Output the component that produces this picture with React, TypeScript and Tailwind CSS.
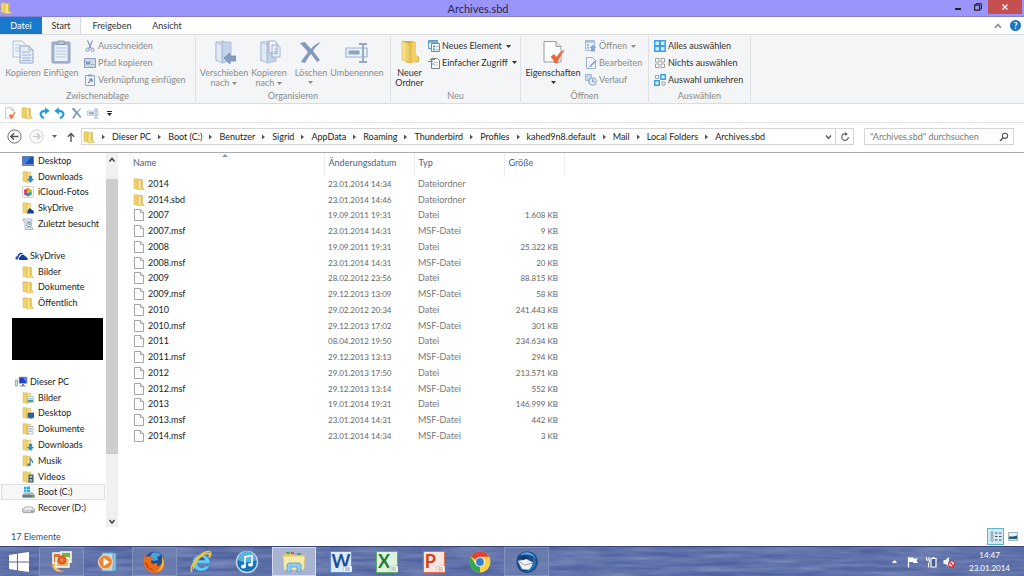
import type { ReactNode } from 'react';

type IconProps = { className?: string };

const FolderIcon = ({ className = 'h-3 w-3' }: IconProps) => (
  <svg viewBox="0 0 12 12" className={className}>
    <path d="M1 .8h4l1 1v9.500L1 10.500z" fill="#f0d26a" stroke="#d6b146" strokeWidth=".5" />
    <path d="M5 2l4-1v8l2 1v1.500L5 11.700z" fill="#f8e48f" stroke="#cda63a" strokeWidth=".5" />
    <path d="M8 1.500l1.500 0v8l-1.500 1z" fill="#e2b840" />
  </svg>
);

const PageIcon = ({ className = 'h-3 w-3' }: IconProps) => (
  <svg viewBox="0 0 12 12" className={className}>
    <path d="M1.500.5h6l3 3v8h-9z" fill="#fdfdfd" stroke="#8f8f8f" strokeWidth=".8" />
    <path d="M7.500.5v3h3" fill="#e8e8e8" stroke="#8f8f8f" strokeWidth=".7" />
  </svg>
);

// Folder with a small picture laid over the lower right corner
const BadgeFolder = ({ children }: { children: ReactNode }) => (
  <svg viewBox="0 0 12 12" className="h-3 w-3 shrink-0">
    <path d="M1 .8h4l1 1v9.500L1 10.500z" fill="#f0d26a" stroke="#d6b146" strokeWidth=".5" />
    <path d="M5 2l3.500-1v9L5 11.500z" fill="#f8e48f" stroke="#cda63a" strokeWidth=".5" />
    {children}
  </svg>
);

const DownloadsIcon = () => (
  <BadgeFolder>
    <path d="M7 5h3v3h1.700L8.500 11.700 5.300 8H7z" fill="#2f8fd0" stroke="#1b6ca8" strokeWidth=".3" />
  </BadgeFolder>
);

const SkyFolderIcon = () => (
  <BadgeFolder>
    <path d="M5.500 11.500V9l2-3 2 1.500 2.300 1.500v2.500z" fill="#0f3f94" />
  </BadgeFolder>
);

const PicturesIcon = () => (
  <BadgeFolder>
    <path d="M5.500 4.500h6v6h-6z" fill="#e8f3f5" stroke="#8fa5ad" strokeWidth=".5" />
    <path d="M6 8h5v2H6z" fill="#4f9a9c" />
    <path d="M6 6h5v1.500H6z" fill="#9fd0ea" />
  </BadgeFolder>
);

const DesktopFolderIcon = () => (
  <BadgeFolder>
    <path d="M6 6h6v4.500H6z" fill="#2a5fb0" stroke="#34486b" strokeWidth=".6" />
    <path d="M7.500 11.300h3" stroke="#555" strokeWidth=".8" />
  </BadgeFolder>
);

const DocsIcon = () => (
  <BadgeFolder>
    <path d="M6 3.500h5v7.500H6z" fill="#f5f8fb" stroke="#8b9aa8" strokeWidth=".6" />
    <path d="M7 5.500h3M7 7h3M7 8.500h3" stroke="#6f87a8" strokeWidth=".5" />
  </BadgeFolder>
);

const MusicIcon = () => (
  <BadgeFolder>
    <path d="M8 3c.5 1.500 3 2 2.500 5" fill="none" stroke="#2a87bd" strokeWidth="1.300" />
    <path d="M8 3v6.500" stroke="#2a87bd" />
    <ellipse cx="7" cy="9.800" rx="1.700" ry="1.300" fill="#2a87bd" />
  </BadgeFolder>
);

const VideosIcon = () => (
  <BadgeFolder>
    <path d="M6.500 3.500h5v8h-5z" fill="#33444c" />
    <path d="M7.700 4.500h2.600v2.500H7.700zM7.700 8h2.600v2.500H7.700z" fill="#8fc4c2" />
    <path d="M7 4v7.500M11 4v7.500" stroke="#d5dde0" strokeWidth=".4" strokeDasharray=".6 .6" />
  </BadgeFolder>
);

const DesktopIcon = () => (
  <svg viewBox="0 0 12 12" className="h-3 w-3 shrink-0">
    <path d="M.5 1.500h11v9H.5z" fill="#1d4fae" stroke="#4d6c9e" strokeWidth=".7" />
    <path d="M1 2h8L3 9H1z" fill="#3f7fdc" />
    <path d="M1 9.500h10" stroke="#8fa9cf" strokeWidth=".8" />
  </svg>
);

const ICloudIcon = () => (
  <svg viewBox="0 0 12 12" className="h-3 w-3 shrink-0">
    <rect x=".4" y=".4" width="11.200" height="11.200" rx="2" fill="#fff" stroke="#b5b5b5" strokeWidth=".7" />
    <circle cx="6" cy="3.600" r="1.900" fill="#f59a22" />
    <circle cx="8.200" cy="5" r="1.900" fill="#b9c92f" />
    <circle cx="8" cy="7.500" r="1.900" fill="#3fae62" />
    <circle cx="6" cy="8.600" r="1.900" fill="#3f7fd0" />
    <circle cx="3.900" cy="7.400" r="1.900" fill="#9a4fb5" />
    <circle cx="3.800" cy="5" r="1.900" fill="#e5403f" />
    <circle cx="6" cy="6" r=".6" fill="#fff" />
  </svg>
);

const RecentIcon = () => (
  <svg viewBox="0 0 12 12" className="h-3 w-3 shrink-0">
    <path d="M1 1h9v2H9v7h2v1.500H3V3H1z" fill="#e4edf2" stroke="#8397a5" strokeWidth=".6" />
    <path d="M4.500 3.500h3M4.500 9.500h3" stroke="#8397a5" strokeWidth=".6" />
    <circle cx="7" cy="6.500" r="2.200" fill="#f6fafc" stroke="#54788f" strokeWidth=".7" />
    <path d="M7 5v1.500h1.200" fill="none" stroke="#345" strokeWidth=".6" />
  </svg>
);

const SkyDriveIcon = () => (
  <svg viewBox="0 0 13 12" className="h-3 w-[13px] shrink-0">
    <path d="M1 9.500C-.3 8 1 6 2.500 6.200 2.600 3.500 6 1.500 8.500 4c-3-.5-4.500 1.300-4.500 3-1.300.5-1.500 2-1 2.500z" fill="#1c4fa4" />
    <path d="M4.500 10c-1.500-1-.8-3 .8-3C5.500 4.500 9 4 9.700 6.200c1.800-.2 2.300 1 2.100 1.700C13.500 8.500 13 10 12 10z" fill="#0f3f94" />
  </svg>
);

const ComputerIcon = () => (
  <svg viewBox="0 0 13 12" className="h-3 w-[13px] shrink-0">
    <path d="M.5 4h2v6h-2z" fill="#d5dbe3" stroke="#75818e" strokeWidth=".6" />
    <path d="M4 1h8v6.500H4z" fill="#2540bb" stroke="#a9b7c7" strokeWidth=".8" />
    <path d="M8 1.500h3.500V7z" fill="#5d87ed" />
    <path d="M7 8h2v1.500h2v1H5v-1h2z" fill="#7a8794" />
  </svg>
);

const BootDriveIcon = () => (
  <svg viewBox="0 0 13 12" className="h-3 w-[13px] shrink-0">
    <path d="M2 .7h2.500V3H2zM5 .5h3V3H5zM2 3.500h2.500v2.300H2zM5 3.500h3V6H5z" fill="#18b4e8" />
    <path d="M2 6.500h9l1.500 2.500v2.500H.5V9z" fill="#a7b6bd" />
    <path d="M.5 9h12v2.500H.5z" fill="#5f7d83" />
    <path d="M9.500 10h2" stroke="#6df06d" strokeWidth=".8" />
  </svg>
);

const DriveIcon = () => (
  <svg viewBox="0 0 13 12" className="h-3 w-[13px] shrink-0">
    <path d="M3 5h7l2.500 2.500v2.300l-1 .9h-10l-1-.9V7.500z" fill="#c9cdd0" stroke="#777f85" strokeWidth=".6" />
    <path d="M3.200 5.500h6.600l1.800 2H1.400z" fill="#f3f4f5" />
    <path d="M9 9.200h2.500" stroke="#666" strokeWidth=".7" />
  </svg>
);

const Caret = ({ className = 'text-[#222]' }: IconProps) => (
  <svg viewBox="0 0 5 3" className={`h-[3px] w-[5px] shrink-0 ${className}`}>
    <path d="M0 0h5L2.500 3z" fill="currentColor" />
  </svg>
);

const CopyIcon = () => (
  <svg viewBox="0 0 24 24" className="h-6 w-6">
    <path d="M2 1h9l4 4v12H2z" fill="#eef3f9" stroke="#b4c4d9" />
    <path d="M4 5h6M4 8h7M4 11h7" stroke="#b4c9e5" />
    <path d="M9 6h9l4 4v13H9z" fill="#e6edf6" stroke="#97abc8" />
    <path d="M18 6v4h4" fill="none" stroke="#97abc8" />
    <path d="M11 12h8M11 15h9M11 18h9M11 20.500h9" stroke="#9cb5d8" />
  </svg>
);

const PasteIcon = () => (
  <svg viewBox="0 0 24 24" className="h-6 w-6">
    <rect x="3" y="2" width="18" height="21" rx="1" fill="#a3b4ce" stroke="#8ea1c0" />
    <path d="M5.500 5h13v16h-13z" fill="#eaf0f7" />
    <path d="M9 1h6l1 3.500H8z" fill="#b7c5d9" stroke="#7d91b0" strokeWidth=".8" />
    <path d="M7 8h10M7 11h10M7 14h10M7 17h10" stroke="#b3c4dd" />
  </svg>
);

const BlueFolder = ({ children }: { children: ReactNode }) => (
  <svg viewBox="0 0 24 24" className="h-6 w-6">
    <path d="M4 2l8-1v19l-8 1z" fill="#d4e0ef" stroke="#a5b9d3" strokeWidth=".7" />
    <path d="M10 2h9v19l-9 2z" fill="#c3d3e8" stroke="#9bb0cd" strokeWidth=".7" />
    <path d="M4 2l6 3v18l-6-3z" fill="#e1e9f4" stroke="#9bb0cd" strokeWidth=".7" />
    {children}
  </svg>
);

const MoveToIcon = () => (
  <BlueFolder>
    <path d="M12 18l6-5v3h6v5h-6v3z" fill="#869cbe" stroke="#6f86aa" strokeWidth=".7" />
  </BlueFolder>
);

const CopyToIcon = () => (
  <BlueFolder>
    <path d="M12 1h6l2 2v10h-8zM15 5h6l2 2v10h-8z" fill="#f0f4fa" stroke="#8ba2c4" strokeWidth=".8" />
    <path d="M17 9h4M17 11.500h4M17 14h4" stroke="#95add0" strokeWidth=".8" />
  </BlueFolder>
);

const DeleteIcon = ({ className = 'h-6 w-6' }: IconProps) => (
  <svg viewBox="0 0 24 24" className={className}>
    <path d="M1 3l5-1 6 7c3-4 6-6 10-7-3 3-6 5-8 9l7 9-3 2-6-8c-3 3-4 6-6 9l-4-1c3-5 5-7 7-10z" fill="#8499bb" />
  </svg>
);

const RenameIcon = ({ className = 'h-6 w-6' }: IconProps) => (
  <svg viewBox="0 0 24 24" className={className}>
    <path d="M1 8h21v9H1z" fill="#eff4fa" stroke="#9bb0ce" strokeWidth="1.200" />
    <path d="M3.500 10.500h11v4h-11z" fill="#8ea4c5" />
    <path d="M14 4h3c1 0 1 1 1 1s0-1 1-1h3M18 5v16M14 22h3c1 0 1-1 1-1s0 1 1 1h3" fill="none" stroke="#8fa5c6" strokeWidth="1.800" />
  </svg>
);

const NewFolderIcon = () => (
  <svg viewBox="0 0 24 24" className="h-6 w-6">
    <defs>
      <linearGradient id="newFolder" x1="0" x2="1">
        <stop offset="0" stopColor="#fbe99c" />
        <stop offset="1" stopColor="#e5bd4b" />
      </linearGradient>
    </defs>
    <path d="M4 1h9l5 1v13l3 2v5L9 23z" fill="#d9ac3b" />
    <path d="M12 3l6-1v12l2 3v4l-8 2z" fill="#f1d167" />
    <path d="M4 1l9 3v19l-9-3z" fill="url(#newFolder)" stroke="#d4ac43" strokeWidth=".6" />
  </svg>
);

const PropertiesIcon = ({ className = 'h-6 w-6' }: IconProps) => (
  <svg viewBox="0 0 24 24" className={className}>
    <path d="M3 1.500h12l5 5V22H3z" fill="#fdfdfd" stroke="#9a9a9a" />
    <path d="M15 1.500v5h5" fill="#e5e5e5" stroke="#9a9a9a" />
    <path d="M10 17l3-2.500 3 3c2-4 4-6 7-7-3 4-5 7-7 12.500h-2c-1-2.500-2-4-4-6z" fill="#e8693c" stroke="#e8693c" strokeWidth=".8" />
  </svg>
);

const CutIcon = () => (
  <svg viewBox="0 0 12 12" className="h-3 w-3">
    <path d="M3.500.5l3.700 8M8.500.5l-3.700 8" stroke="#8497b5" strokeWidth="1.200" />
    <circle cx="3.500" cy="9.700" r="1.600" fill="none" stroke="#8497b5" />
    <circle cx="8.500" cy="9.700" r="1.600" fill="none" stroke="#8497b5" />
  </svg>
);

const PathIcon = () => (
  <svg viewBox="0 0 12 12" className="h-3 w-3">
    <path d="M.5 1.500h11v9H.5z" fill="#cddaeb" stroke="#8ba1c2" />
    <path d="M2 4l1 3.500L4 5l1 2.500L6 4M7.200 7.500h1M9.200 7.500h1" fill="none" stroke="#5f7799" strokeWidth=".8" />
  </svg>
);

const ShortcutIcon = () => (
  <svg viewBox="0 0 12 12" className="h-3 w-3">
    <path d="M1.500 1.500h9v10h-9z" fill="#eff4fa" stroke="#8fa4c3" />
    <path d="M4 .5h4v2H4z" fill="#8fa4c3" />
    <path d="M4 9l3.500-3.500M5 5h3v3" fill="none" stroke="#6c88b3" strokeWidth="1.200" />
  </svg>
);

const NewItemIcon = () => (
  <svg viewBox="0 0 12 12" className="h-3 w-3">
    <path d="M.5.5h9v8h-9z" fill="#e9f2f8" stroke="#5a9cbf" />
    <path d="M1 2h8" stroke="#5a9cbf" strokeWidth="1.500" />
    <path d="M3.500 3.500h8v8h-8z" fill="#fff" stroke="#6b8ea5" />
    <path d="M5 5.500h2v2H5zM5 8.500h2v2H5z" fill="#4aa0d8" />
    <path d="M8 6.500h2.500M8 9.500h2.500" stroke="#888" strokeWidth=".7" />
  </svg>
);

const EasyAccessIcon = () => (
  <svg viewBox="0 0 12 12" className="h-3 w-3">
    <path d="M3.500 1.500h6l2 2v8h-8z" fill="#fff" stroke="#77838d" />
    <path d="M0 4.500h5M2 2.500h5M3 7h3" stroke="#2d9bd5" />
    <path d="M6 5.500h4M6 8h4" stroke="#aaa" strokeWidth=".7" />
  </svg>
);

const OpenIcon = () => (
  <svg viewBox="0 0 12 12" className="h-3 w-3">
    <path d="M.5.500h9v10h-9z" fill="#edf3fa" stroke="#a5b9d5" />
    <path d="M1 2h8" stroke="#a5b9d5" strokeWidth="1.500" />
    <path d="M2 5h2M2 8h2" stroke="#7fa3cf" strokeWidth="1.500" />
    <path d="M8 4.500l3.500 3.500H10v3.500H6V8H4.500z" fill="#8ea6c8" />
  </svg>
);

const EditIcon = () => (
  <svg viewBox="0 0 12 12" className="h-3 w-3">
    <path d="M1.500.5h6l3 3v8h-9z" fill="#eef4fb" stroke="#9cb2d0" />
    <path d="M4 9.500L10.500 3l1 1L5.500 10z" fill="#7c9ac4" />
  </svg>
);

const HistoryIcon = () => (
  <svg viewBox="0 0 12 12" className="h-3 w-3">
    <path d="M.5.5h6v6h-6z" fill="#c6d7eb" stroke="#a4b9d6" />
    <path d="M1 6h5v4z" fill="#a4b9d6" />
    <circle cx="7.700" cy="7.500" r="3.800" fill="#e6eef8" stroke="#8ba4c8" />
    <path d="M7.700 5v2.800h2" fill="none" stroke="#6f8cb5" />
  </svg>
);

const SelectAllIcon = () => (
  <svg viewBox="0 0 12 12" className="h-3 w-3">
    <path d="M0 0h12v12H0z" fill="#3d9fe6" />
    <path d="M1.500 1.500H5V5H1.500zM7 1.500h3.500V5H7zM1.500 7H5v3.500H1.500zM7 7h3.500v3.500H7z" fill="#d3ecfc" />
  </svg>
);

const SelectNoneIcon = () => (
  <svg viewBox="0 0 12 12" className="h-3 w-3">
    <path d="M1.500 1.500H5V5H1.500zM7 1.500h3.500V5H7zM1.500 7H5v3.500H1.500zM7 7h3.500v3.500H7z" fill="#fff" stroke="#8c8c8c" strokeWidth=".8" />
  </svg>
);

const InvertIcon = () => (
  <svg viewBox="0 0 12 12" className="h-3 w-3">
    <path d="M1.500 1.500H4.500V4.500H1.500zM8 8h3v3H8z" fill="#fff" stroke="#8c8c8c" strokeWidth=".8" />
    <path d="M6.700.7h4.600v4.600H6.700zM.7 6.700h4.600v4.600H.7z" fill="#d3ecfc" stroke="#3d9fe6" strokeWidth="1.400" />
  </svg>
);

const RedoIcon = ({ className = 'h-3 w-3' }: IconProps) => (
  <svg viewBox="0 0 12 12" className={className}>
    <path d="M6 11C1.500 9.500 1 3.500 8 3.800" fill="none" stroke="#2a9bd8" strokeWidth="2.200" />
    <path d="M7 .5l4.800 3.300L7 7.500z" fill="#2a9bd8" />
  </svg>
);

type LargeButtonProps = { icon: ReactNode; lines: string[]; width: string; enabled?: boolean; menu?: boolean };

function LargeButton({ icon, lines, width, enabled = false, menu = false }: LargeButtonProps) {
  const last = lines.length - 1;
  return (
    <button className={`flex shrink-0 flex-col items-center ${width} ${enabled ? 'text-[#333]' : 'text-[#8c8c8c]'}`}>
      {icon}
      <span className="mt-1 flex flex-col items-center leading-[10px] whitespace-nowrap">
        {lines.map((line, i) => (
          <span key={line} className="flex items-center gap-[3px]">
            {line}
            {menu && last > 0 && i === last && <Caret className="text-current" />}
          </span>
        ))}
        {menu && last === 0 && <Caret className="mt-[3px] text-current" />}
      </span>
    </button>
  );
}

type SmallButtonProps = { icon: ReactNode; label: string; enabled?: boolean; menu?: boolean };

function SmallButton({ icon, label, enabled = false, menu = false }: SmallButtonProps) {
  return (
    <button className={`flex items-center gap-[2px] whitespace-nowrap ${enabled ? 'text-[#333]' : 'text-[#8c8c8c]'}`}>
      {icon}
      {label}
      {menu && <Caret className="ml-[2px] text-current" />}
    </button>
  );
}

function RibbonGroup({ title, width, children }: { title: string; width: string; children: ReactNode }) {
  return (
    <section className={`flex shrink-0 flex-col border-r border-[#dfe1e3] ${width}`}>
      <div className="flex h-[55px] items-start px-1 pt-1">{children}</div>
      <h2 className="text-center leading-[12px] text-[#8a8a8a]">{title}</h2>
    </section>
  );
}

const SmallColumn = ({ children }: { children: ReactNode }) => (
  <div className="-mt-[2px] ml-1 grid h-[50px] grid-rows-3">{children}</div>
);

const TitleBar = () => (
  <header className="flex h-[17px] items-start border-b border-[#8580d6] bg-[#9a95fa]">
    <FolderIcon className="mt-[2px] h-3 w-3" />
    <h1 className="flex-1 pr-1 text-center text-[11px] leading-[17px] text-[#2a2846]">Archives.sbd</h1>
    <div className="flex">
      <button aria-label="Minimieren" className="flex h-[14px] w-5 items-center justify-center">
        <span className="mt-1 h-[2px] w-[6px] bg-[#222]" />
      </button>
      <button aria-label="Wiederherstellen" className="flex h-[14px] w-5 items-center justify-center">
        <svg viewBox="0 0 8 8" className="h-2 w-2">
          <path d="M2 2V.6h5.400V6H6" fill="none" stroke="#222" />
          <path d="M.6 2.200h5v5h-5z" fill="none" stroke="#222" strokeWidth="1.200" />
        </svg>
      </button>
      <button aria-label="Schließen" className="mr-[2px] flex h-[14px] w-[34px] items-center justify-center bg-[#c64f50]">
        <svg viewBox="0 0 6 6" className="h-[6px] w-[6px]">
          <path d="M.5.5l5 5M5.500.5l-5 5" stroke="#fff" strokeWidth="1.200" />
        </svg>
      </button>
    </div>
  </header>
);

const RibbonTabs = () => (
  <nav className="flex h-[17px] items-stretch bg-white text-[#333]">
    <button className="w-[42px] bg-[#1979ca] pt-px text-white">Datei</button>
    <button className="w-[39px] border-r border-[#dadbdc] bg-[#f3f5f7] pt-px">Start</button>
    <button className="ml-1 w-[54px] pt-px">Freigeben</button>
    <button className="ml-1 w-[48px] pt-px">Ansicht</button>
    <div className="ml-auto flex items-center gap-2 pr-[3px]">
      <button aria-label="Menüband minimieren">
        <svg viewBox="0 0 8 6" className="h-[6px] w-2">
          <path d="M1 5l3-3.500L7 5" fill="none" stroke="#8a8a8a" strokeWidth="1.600" />
        </svg>
      </button>
      <button aria-label="Hilfe" className="flex h-[11px] w-[11px] items-center justify-center rounded-full bg-[#1a75c4] font-bold text-white">
        ?
      </button>
    </div>
  </nav>
);

const Ribbon = () => (
  <div className="flex h-[70px] border-y border-[#dadbdc] bg-[#f3f5f7] py-[1px]">
    <RibbonGroup title="Zwischenablage" width="w-[196px]">
      <LargeButton icon={<CopyIcon />} lines={['Kopieren']} width="w-[38px]" />
      <LargeButton icon={<PasteIcon />} lines={['Einfügen']} width="w-[38px]" />
      <SmallColumn>
        <SmallButton icon={<CutIcon />} label="Ausschneiden" />
        <SmallButton icon={<PathIcon />} label="Pfad kopieren" />
        <SmallButton icon={<ShortcutIcon />} label="Verknüpfung einfügen" />
      </SmallColumn>
    </RibbonGroup>
    <RibbonGroup title="Organisieren" width="w-[195px]">
      <LargeButton icon={<MoveToIcon />} lines={['Verschieben', 'nach']} width="w-[48px]" menu />
      <LargeButton icon={<CopyToIcon />} lines={['Kopieren', 'nach']} width="w-[42px]" menu />
      <div className="mx-[2px] h-11 w-px bg-[#dfe1e3]" />
      <LargeButton icon={<DeleteIcon />} lines={['Löschen']} width="w-[34px]" menu />
      <LargeButton icon={<RenameIcon />} lines={['Umbenennen']} width="w-[58px]" />
    </RibbonGroup>
    <RibbonGroup title="Neu" width="w-[130px]">
      <LargeButton icon={<NewFolderIcon />} lines={['Neuer', 'Ordner']} width="w-[29px]" enabled />
      <SmallColumn>
        <SmallButton icon={<NewItemIcon />} label="Neues Element" enabled menu />
        <SmallButton icon={<EasyAccessIcon />} label="Einfacher Zugriff" enabled menu />
        <span />
      </SmallColumn>
    </RibbonGroup>
    <RibbonGroup title="Öffnen" width="w-[128px]">
      <LargeButton icon={<PropertiesIcon />} lines={['Eigenschaften']} width="w-[56px]" enabled menu />
      <SmallColumn>
        <SmallButton icon={<OpenIcon />} label="Öffnen" menu />
        <SmallButton icon={<EditIcon />} label="Bearbeiten" />
        <SmallButton icon={<HistoryIcon />} label="Verlauf" />
      </SmallColumn>
    </RibbonGroup>
    <RibbonGroup title="Auswählen" width="w-[102px]">
      <div className="-ml-[3px]">
        <SmallColumn>
          <SmallButton icon={<SelectAllIcon />} label="Alles auswählen" enabled />
          <SmallButton icon={<SelectNoneIcon />} label="Nichts auswählen" enabled />
          <SmallButton icon={<InvertIcon />} label="Auswahl umkehren" enabled />
        </SmallColumn>
      </div>
    </RibbonGroup>
  </div>
);

const QuickAccess = () => (
  <div className="flex h-[19px] items-center gap-1 border-b border-[#e4e4e4] px-1">
    <button aria-label="Eigenschaften"><PropertiesIcon className="h-3 w-3" /></button>
    <button aria-label="Neuer Ordner" className="ml-px"><FolderIcon /></button>
    <button aria-label="Wiederholen" className="ml-px"><RedoIcon /></button>
    <button aria-label="Rückgängig"><RedoIcon className="h-3 w-3 -scale-x-100" /></button>
    <button aria-label="Löschen" className="ml-px"><DeleteIcon className="h-3 w-3" /></button>
    <button aria-label="Umbenennen"><RenameIcon className="h-3 w-3" /></button>
    <button aria-label="Symbolleiste anpassen" className="ml-1 flex flex-col items-center gap-px">
      <span className="h-px w-[5px] bg-[#222]" />
      <Caret />
    </button>
  </div>
);

const crumbs = [
  'Dieser PC', 'Boot (C:)', 'Benutzer', 'Sigrid', 'AppData', 'Roaming', 'Thunderbird',
  'Profiles', 'kahed9n8.default', 'Mail', 'Local Folders', 'Archives.sbd',
];

const AddressBar = () => (
  <div className="flex h-[30px] items-center border-b border-[#a9abad] pr-[10px] pb-[2px] pl-[7px]">
    <button aria-label="Zurück">
      <svg viewBox="0 0 15 15" className="h-[15px] w-[15px]">
        <circle cx="7.500" cy="7.500" r="6.600" fill="#fff" stroke="#6f6f6f" />
        <path d="M11.500 7.500H4M7 4.300L3.800 7.500 7 10.700" fill="none" stroke="#555" strokeWidth="1.500" />
      </svg>
    </button>
    <button aria-label="Vorwärts" className="ml-[7px]">
      <svg viewBox="0 0 15 15" className="h-[15px] w-[15px]">
        <circle cx="7.500" cy="7.500" r="6.600" fill="#fff" stroke="#cfcfcf" />
        <path d="M3.500 7.500H11M8 4.300l3.200 3.200L8 10.700" fill="none" stroke="#c9c9c9" strokeWidth="1.500" />
      </svg>
    </button>
    <button aria-label="Zuletzt besuchte Orte" className="ml-[8px]"><Caret className="text-[#666]" /></button>
    <button aria-label="Nach oben" className="ml-[9px]">
      <svg viewBox="0 0 10 10" className="h-[10px] w-[10px]">
        <path d="M5 10V1.500M1.800 4.700L5 1.500l3.200 3.200" fill="none" stroke="#555" strokeWidth="1.400" />
      </svg>
    </button>
    <div className="ml-[5px] flex h-[17px] min-w-0 flex-1 items-center border border-[#d6d6d6] pl-px">
      <FolderIcon className="h-3 w-3 shrink-0" />
      <nav className="flex min-w-0 flex-1">
        {crumbs.map((crumb) => (
          <span key={crumb} className="flex items-center whitespace-nowrap">
            <svg viewBox="0 0 17 8" className="h-2 w-[17px] shrink-0">
              <path d="M7 1.500L10 4l-3 2.500z" fill="#555" />
            </svg>
            <a href="#" className="text-[#222]">{crumb}</a>
          </span>
        ))}
      </nav>
      <button aria-label="Verlauf anzeigen" className="px-[3px]">
        <svg viewBox="0 0 7 6" className="h-[6px] w-[7px]">
          <path d="M1 1.500L3.500 4.500 6 1.500" fill="none" stroke="#555" strokeWidth="1.300" />
        </svg>
      </button>
      <button aria-label="Aktualisieren" className="flex h-full w-[18px] items-center justify-center border-l border-[#d6d6d6]">
        <svg viewBox="0 0 10 10" className="h-[10px] w-[10px]">
          <path d="M6.800 2.300A3.300 3.300 0 1 0 8.300 5" fill="none" stroke="#666" strokeWidth="1.200" />
          <path d="M5 .3v3.700L8 2z" fill="#666" />
        </svg>
      </button>
    </div>
    <label className="ml-[10px] flex h-[17px] w-[150px] items-center border border-[#d6d6d6] pr-1 pl-[5px]">
      <input
        type="text"
        aria-label="Archives.sbd durchsuchen"
        placeholder={'"Archives.sbd" durchsuchen'}
        className="min-w-0 flex-1 outline-none placeholder:text-[#777]"
      />
      <svg viewBox="0 0 10 10" className="h-[10px] w-[10px]">
        <circle cx="6" cy="3.800" r="2.600" fill="none" stroke="#555" strokeWidth="1.100" />
        <path d="M4.200 5.700L1 9" stroke="#555" strokeWidth="1.400" />
      </svg>
    </label>
  </div>
);

type Entry = { icon: ReactNode; label: string };

const favorites: Entry[] = [
  { icon: <DesktopIcon />, label: 'Desktop' },
  { icon: <DownloadsIcon />, label: 'Downloads' },
  { icon: <ICloudIcon />, label: 'iCloud-Fotos' },
  { icon: <SkyFolderIcon />, label: 'SkyDrive' },
  { icon: <RecentIcon />, label: 'Zuletzt besucht' },
];

const skyDrive: Entry[] = [
  { icon: <FolderIcon />, label: 'Bilder' },
  { icon: <FolderIcon />, label: 'Dokumente' },
  { icon: <FolderIcon />, label: 'Öffentlich' },
];

const thisPc: Entry[] = [
  { icon: <PicturesIcon />, label: 'Bilder' },
  { icon: <DesktopFolderIcon />, label: 'Desktop' },
  { icon: <DocsIcon />, label: 'Dokumente' },
  { icon: <DownloadsIcon />, label: 'Downloads' },
  { icon: <MusicIcon />, label: 'Musik' },
  { icon: <VideosIcon />, label: 'Videos' },
  { icon: <BootDriveIcon />, label: 'Boot (C:)' },
  { icon: <DriveIcon />, label: 'Recover (D:)' },
];

type TreeProps = { root?: Entry; entries: Entry[]; selected?: string; height: string };

const Tree = ({ root, entries, selected, height }: TreeProps) => (
  <ul className={`grid auto-rows-fr ${height}`}>
    {root && (
      <li className="flex items-center pl-[15px]">
        <a href="#" className="flex items-center gap-[2px]">{root.icon}{root.label}</a>
      </li>
    )}
    {entries.map((entry) => (
      <li
        key={entry.label}
        className={`ml-px flex items-center border pl-5 ${entry.label === selected ? 'border-[#dedede] bg-[#f7f7f7]' : 'border-transparent'}`}
      >
        <a href="#" className="flex items-center gap-1 whitespace-nowrap">
          <span className="flex w-3 justify-center">{entry.icon}</span>
          {entry.label}
        </a>
      </li>
    ))}
  </ul>
);

const Sidebar = () => (
  <aside className="flex w-[118px] shrink-0 text-[#222]">
    <div className="w-[105px]">
      <Tree entries={favorites} height="h-[79px]" />
      <div className="mt-4">
        <Tree root={{ icon: <SkyDriveIcon />, label: 'SkyDrive' }} entries={skyDrive} height="h-[63px]" />
      </div>
      <div className="mt-[7px] mr-[2px] ml-3 h-[42px] bg-black" />
      <div className="mt-[14px]">
        <Tree root={{ icon: <ComputerIcon />, label: 'Dieser PC' }} entries={thisPc} selected="Boot (C:)" height="h-[142px]" />
      </div>
    </div>
    <div className="ml-px flex w-3 flex-col bg-[#f0f0f0]">
      <svg viewBox="0 0 12 26" className="h-[26px] w-3 shrink-0">
        <path d="M3.500 8.500L6 5.500l2.500 3" fill="none" stroke="#444" strokeWidth="1.500" />
      </svg>
      <div className="h-[275px] bg-[#cdcdcd]" />
      <svg viewBox="0 0 12 12" className="mt-auto h-3 w-3 shrink-0">
        <path d="M3.500 5L6 8l2.500-3" fill="none" stroke="#444" strokeWidth="1.500" />
      </svg>
    </div>
  </aside>
);

const files = [
  ['2014', '23.01.2014 14:34', 'Dateiordner', ''],
  ['2014.sbd', '23.01.2014 14:46', 'Dateiordner', ''],
  ['2007', '19.09.2011 19:31', 'Datei', '1.608 KB'],
  ['2007.msf', '23.01.2014 14:31', 'MSF-Datei', '9 KB'],
  ['2008', '19.09.2011 19:31', 'Datei', '25.322 KB'],
  ['2008.msf', '23.01.2014 14:31', 'MSF-Datei', '20 KB'],
  ['2009', '28.02.2012 23:56', 'Datei', '88.815 KB'],
  ['2009.msf', '29.12.2013 13:09', 'MSF-Datei', '58 KB'],
  ['2010', '29.02.2012 20:34', 'Datei', '241.443 KB'],
  ['2010.msf', '29.12.2013 17:02', 'MSF-Datei', '301 KB'],
  ['2011', '08.04.2012 19:50', 'Datei', '234.634 KB'],
  ['2011.msf', '29.12.2013 13:13', 'MSF-Datei', '294 KB'],
  ['2012', '29.01.2013 17:50', 'Datei', '213.571 KB'],
  ['2012.msf', '29.12.2013 13:14', 'MSF-Datei', '552 KB'],
  ['2013', '19.01.2014 19:31', 'Datei', '146.999 KB'],
  ['2013.msf', '23.01.2014 14:31', 'MSF-Datei', '442 KB'],
  ['2014.msf', '23.01.2014 14:34', 'MSF-Datei', '3 KB'],
];

const FileList = () => (
  <main className="min-w-0 flex-1 pl-[11px]">
    <table className="h-[291px] w-[435px] table-fixed border-collapse text-left leading-[12px]">
      <colgroup>
        <col className="w-[195px]" />
        <col className="w-[90px]" />
        <col className="w-[90px]" />
        <col className="w-[60px]" />
      </colgroup>
      <thead className="text-[#4c607a]">
        <tr className="h-[23px] align-top">
          <th className="relative border-r border-[#ececec] pt-1 pl-1 font-normal">
            Name
            <svg viewBox="0 0 6 3" className="absolute top-px left-[93px] h-[3px] w-[6px]">
              <path d="M0 3l3-3 3 3z" fill="#7d9cb5" />
            </svg>
          </th>
          <th className="border-r border-[#ececec] pt-1 pl-1 font-normal">Änderungsdatum</th>
          <th className="border-r border-[#ececec] pt-1 pl-1 font-normal">Typ</th>
          <th className="border-r border-[#ececec] pt-1 pl-1 font-normal">Größe</th>
        </tr>
      </thead>
      <tbody className="text-[#777]">
        {files.map(([name, date, type, size]) => (
          <tr key={name}>
            <td className="pl-1 text-[#222]">
              <span className="flex items-center gap-[3px]">
                {type === 'Dateiordner' ? <FolderIcon /> : <PageIcon />}
                {name}
              </span>
            </td>
            <td className="pl-1 text-[8px] text-[#666]">{date}</td>
            <td className="pl-1">{type}</td>
            <td className="pr-[6px] text-right text-[8px] text-[#666]">{size}</td>
          </tr>
        ))}
      </tbody>
    </table>
  </main>
);

const StatusBar = () => (
  <footer className="flex h-[19px] items-center pr-[6px] pl-[11px] text-[#3c4f6e]">
    <span>17 Elemente</span>
    <button aria-label="Details" className="ml-auto flex h-[17px] w-[17px] items-center justify-center border border-[#5bb5d3] bg-[#cdeaf5]">
      <svg viewBox="0 0 12 11" className="h-[11px] w-3">
        <path d="M1 1h2v2H1zM1 4.500h2v2H1zM1 8h2v2H1z" fill="#fff" stroke="#666" strokeWidth=".6" />
        <path d="M5 2h2.500M9 2h2.500M5 5.500h2.500M9 5.500h2.500M5 9h2.500M9 9h2.500" stroke="#555" />
      </svg>
    </button>
    <button aria-label="Große Symbole" className="ml-1">
      <svg viewBox="0 0 10 9" className="h-[9px] w-[10px]">
        <path d="M.5.5h9v8h-9z" fill="#e8f2f8" stroke="#9db3c0" />
        <path d="M1 4.500h4l4-1V7H1z" fill="#285b7b" />
      </svg>
    </button>
  </footer>
);

const taskIcon = 'h-6 w-6';

const PhotoAppIcon = () => (
  <svg viewBox="0 0 24 24" className={taskIcon}>
    <path d="M3 14c0 8 9 9 12 7-5 0-8-3-8-7z" fill="#efc377" stroke="#c98f39" strokeWidth=".5" />
    <path d="M4 3h10v10H4z" fill="#d77a2f" stroke="#fff" strokeWidth="1.500" />
    <path d="M12 2h10v10H12z" fill="#79b345" stroke="#fff" strokeWidth="1.500" />
    <path d="M7 8h13v9H7z" fill="#e9b870" stroke="#fff" strokeWidth="1.300" />
    <circle cx="13" cy="10" r="4.500" fill="#d9481c" />
    <path d="M13 5v10M8 10h10M9.500 6.500l7 7M16.500 6.500l-7 7" stroke="#f39a44" strokeWidth=".8" />
  </svg>
);

const MediaPlayerIcon = () => (
  <svg viewBox="0 0 24 24" className={taskIcon}>
    <path d="M10 3h10v18H10z" fill="#8dc3e3" stroke="#4a90bd" />
    <path d="M6 3h11v18H6z" fill="#b5dcf0" stroke="#5fa2c9" />
    <circle cx="9.500" cy="12" r="7" fill="#ef8430" stroke="#f7d7b7" strokeWidth="1.200" />
    <path d="M7.500 8L13.500 12l-6 4z" fill="#fff" />
  </svg>
);

const FirefoxIcon = () => (
  <svg viewBox="0 0 24 24" className={taskIcon}>
    <circle cx="12.500" cy="11" r="9.500" fill="#244d91" />
    <path d="M10 3c4-2 8 0 9 2l-4 2 1 3-5 1-3-4z" fill="#47a3d8" />
    <path d="M3 4c0 2 0 2 1 3 2-1 4-1 5 0l2 2-2 2c0 3 3 4 5 2 2 0 2 2 0 3 5 1 7-3 6-9 5 8 2 16-7 16C4 23-1 14 3 4z" fill="#e96b1e" />
    <path d="M20 6c4 7 1 15-6 16 5-3 7-8 6-16z" fill="#fbc33b" />
    <path d="M3 12c1 6 6 9 10 8-3 0-7-2-8-7z" fill="#c8401a" />
  </svg>
);

const ExplorerEIcon = () => (
  <svg viewBox="0 0 24 24" className={taskIcon}>
    <path d="M21 13.500H8.500c.3 5 6 5.500 7.500 2.500h4.500C17.500 23.500 4 23 3.500 12.500 3.800 2 21 1.500 21 13.500z" fill="#62caf6" stroke="#2b8cc9" strokeWidth=".6" />
    <path d="M8.500 10.300h7.500c-.5-4.500-7-4.500-7.500 0z" fill="#3e568f" />
    <path d="M3 22C-1 17 12 1 20 1.500c3 .5 2 4 0 6 1-3 1-4-1-4C13 3 3 15 4.500 19.500" fill="none" stroke="#f5c535" strokeWidth="1.500" />
  </svg>
);

const ITunesIcon = () => (
  <svg viewBox="0 0 24 24" className={taskIcon}>
    <circle cx="12" cy="12" r="10.500" fill="#1875b9" stroke="#bfd6e5" strokeWidth="1.500" />
    <path d="M3 10a9 9 0 0 1 18 0c-5 3-12 3-18 0z" fill="#58b2e2" />
    <path d="M10 16V7l7-1.500V14" fill="none" stroke="#fff" strokeWidth="1.600" />
    <ellipse cx="8.500" cy="16.500" rx="2.500" ry="1.900" fill="#fff" />
    <ellipse cx="15.500" cy="14.700" rx="2.500" ry="1.900" fill="#fff" />
  </svg>
);

const FileExplorerIcon = () => (
  <svg viewBox="0 0 24 24" className={taskIcon}>
    <path d="M2 3h8l1 2h11v15H2z" fill="#e9c868" />
    <path d="M4 2h4v2H4zM15 3h4v2h-4z" fill="#56a456" />
    <path d="M9 2h3v2H9z" fill="#d9563c" />
    <path d="M1 6h22l-1 14H2z" fill="#faeaa9" stroke="#dcbd62" strokeWidth=".6" />
    <path d="M5 22v-7c0-1 1-2 2-2h10c1 0 2 1 2 2v7h-4v-5H9v5z" fill="#8ccbeb" stroke="#519fc9" strokeWidth=".8" />
  </svg>
);

// Office program tiles: a sheet with the program's letter
const OfficeIcon = ({ letter, tile, text }: { letter: string; tile: string; text: string }) => (
  <span className={`relative flex h-[22px] w-[22px] border pl-px font-bold ${tile}`}>
    <span className={`text-[18px] leading-[19px] ${text}`}>{letter}</span>
    <svg viewBox="0 0 10 9" className={`absolute -right-px bottom-0 h-[9px] w-[10px] ${text}`}>
      <path d="M1 4l6-1.500 3 1V9H2z" fill="#fff" stroke="#9aa" strokeWidth=".5" />
      <path d="M3 5h5M3 7h5" stroke="currentColor" strokeWidth=".6" />
    </svg>
  </span>
);

const ChromeIcon = () => (
  <svg viewBox="0 0 24 24" className={taskIcon}>
    <circle cx="12" cy="12" r="10.500" fill="#fbd03e" />
    <path d="M12 12L2.900 6.800A10.500 10.500 0 0 1 21.100 6.800H12z" fill="#dd4437" />
    <path d="M12 12l0 10.500A10.500 10.500 0 0 1 2.900 6.800L7.500 14.500z" fill="#33a457" />
    <path d="M12 7h9.300c2 5-1 14-9.300 15.500l4.500-8z" fill="#fbd03e" />
    <circle cx="12" cy="12" r="5" fill="#f2f4f5" />
    <circle cx="12" cy="12" r="3.900" fill="#397ed0" />
  </svg>
);

const ThunderbirdIcon = () => (
  <svg viewBox="0 0 24 24" className={taskIcon}>
    <path d="M2 8C5 0 19-1 22 8c3 9-4 15-11 15C4 22 0 16 2 8z" fill="#174a86" />
    <path d="M5 5c5-5 14-3 16 4-4-5-10-5-16-4z" fill="#56a3dd" />
    <path d="M3 11l8-2 8 4-3 7-9-1z" fill="#f2f3f3" stroke="#a8b5bf" strokeWidth=".6" />
    <path d="M3.500 11l6 4 9-2" fill="none" stroke="#909fab" />
    <path d="M18 6c6 7 2 15-7 16 6-4 8-9 7-16z" fill="#2c71b7" />
    <path d="M5 8c3-2 6-2 8 0L8 10z" fill="#113462" />
  </svg>
);

const apps = [
  { name: 'Fotos', icon: <PhotoAppIcon />, state: 'open' },
  { name: 'Media Player', icon: <MediaPlayerIcon />, state: 'idle' },
  { name: 'Firefox', icon: <FirefoxIcon />, state: 'open' },
  { name: 'Internet Explorer', icon: <ExplorerEIcon />, state: 'idle' },
  { name: 'iTunes', icon: <ITunesIcon />, state: 'idle' },
  { name: 'Explorer', icon: <FileExplorerIcon />, state: 'active' },
  { name: 'Word', icon: <OfficeIcon letter="W" tile="border-[#5f8dcf] bg-[#dfeaf8]" text="text-[#1d4f9e]" />, state: 'idle' },
  { name: 'Excel', icon: <OfficeIcon letter="X" tile="border-[#5cae68] bg-[#def2e0]" text="text-[#1f7d34]" />, state: 'idle' },
  { name: 'PowerPoint', icon: <OfficeIcon letter="P" tile="border-[#e2704e] bg-[#fbe6dd]" text="text-[#cc4320]" />, state: 'idle' },
  { name: 'Chrome', icon: <ChromeIcon />, state: 'idle' },
  { name: 'Thunderbird', icon: <ThunderbirdIcon />, state: 'open' },
];

const appStates: Record<string, string> = {
  idle: 'border-transparent',
  open: 'border-[#8290bb] bg-[#6f80b0]/60',
  active: 'border-[#d5dced] bg-[#a9b4d2]',
};

const Taskbar = () => (
  <div className="relative flex h-[30px] items-stretch overflow-hidden border-t border-[#3a4473] bg-[#485b9a] text-white">
    <svg className="absolute inset-0 h-full w-full" preserveAspectRatio="none">
      <filter id="water">
        <feTurbulence type="fractalNoise" baseFrequency="0.02 0.2" numOctaves="3" seed="4" />
        <feColorMatrix values="0 0 0 0 .2  0 0 0 0 .26  0 0 0 0 .5  1.200 0 0 0 -.1" />
      </filter>
      <rect width="100%" height="100%" filter="url(#water)" />
    </svg>
    <div className="relative flex flex-1 items-center">
      <button aria-label="Start" className="flex w-[38px] items-center justify-center">
        <svg viewBox="0 0 20 20" className="h-5 w-5">
          <path d="M0 3l8-1.200v7.700H0zM9 1.600L20 0v9.500H9zM0 10.500h8v7.700L0 17zM9 10.500h11V20L9 18.400z" fill="#fff" />
        </svg>
      </button>
      <div className="grid h-full w-[512px] grid-cols-11">
        {apps.map(({ name, icon, state }) => (
          <button key={name} aria-label={name} className={`mx-px flex items-center justify-center border ${appStates[state]}`}>
            {icon}
          </button>
        ))}
      </div>
      <div className="ml-auto flex items-center gap-[6px] pr-[14px]">
        <svg viewBox="0 0 5 3" className="h-[3px] w-[5px]">
          <path d="M0 3h5L2.500 0z" fill="#fff" />
        </svg>
        <svg viewBox="0 0 12 12" className="ml-1 h-3 w-3">
          <path d="M1.500 1v10.500" stroke="#fff" strokeWidth="1.200" />
          <path d="M2 1.500h4.500v1H11l-1.500 2L11 7H6V6H2z" fill="#fff" />
        </svg>
        <svg viewBox="0 0 12 12" className="h-3 w-3">
          <path d="M1.500 1v3M4 1v3M1 4h3.500v2L3.500 7v4.500" fill="none" stroke="#fff" />
          <path d="M6 2.500h5v8.500H6z" fill="#4a5c96" stroke="#fff" strokeWidth="1.200" />
          <path d="M7.500 1.500h2" stroke="#fff" />
        </svg>
        <svg viewBox="0 0 12 12" className="h-3 w-3">
          <path d="M.5 4h2L6 .8v10L2.500 8h-2z" fill="#f2f2f2" />
          <circle cx="8.500" cy="8" r="3" fill="#fff" stroke="#d8282c" strokeWidth="1.200" />
          <path d="M6.500 6l4 4" stroke="#d8282c" strokeWidth="1.200" />
        </svg>
        <time className="ml-2 text-center text-[8px] leading-[13px]">
          14:47
          <br />
          23.01.2014
        </time>
      </div>
    </div>
  </div>
);

export default function App() {
  return (
    <div className="flex min-h-screen flex-col overflow-hidden bg-white font-['Lato','Open_Sans',sans-serif] text-[9px] leading-[12px]">
      <TitleBar />
      <RibbonTabs />
      <Ribbon />
      <QuickAccess />
      <AddressBar />
      <div className="flex flex-1">
        <Sidebar />
        <FileList />
      </div>
      <StatusBar />
      <Taskbar />
    </div>
  );
}
